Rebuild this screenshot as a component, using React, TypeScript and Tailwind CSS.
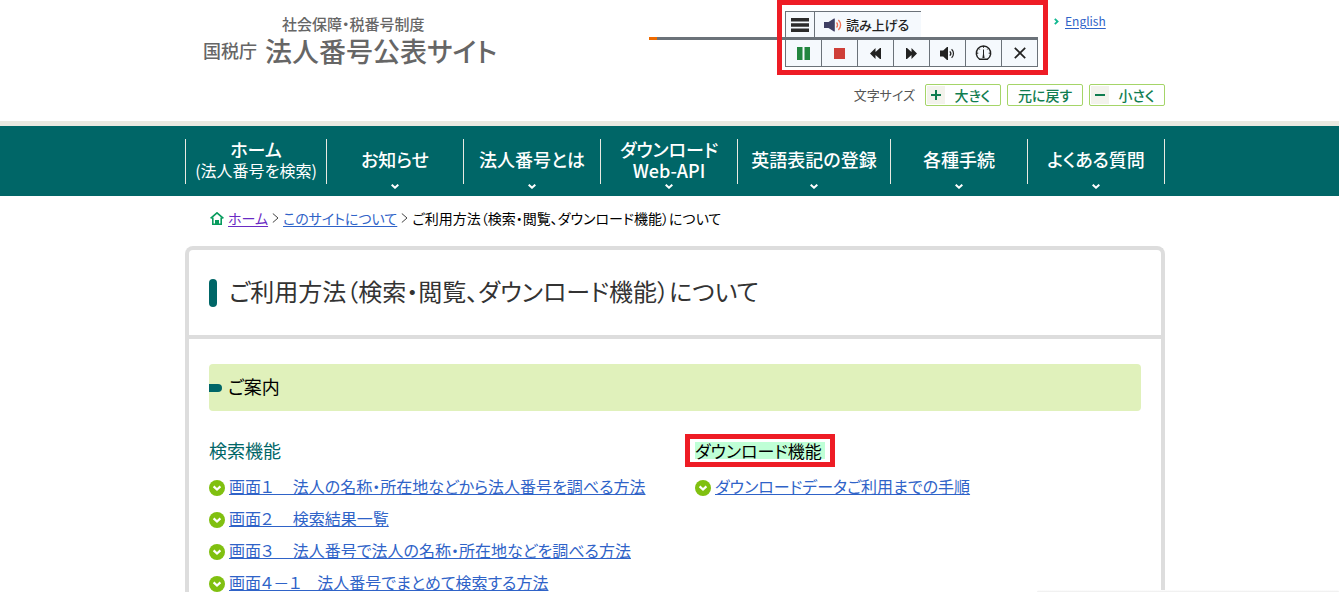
import type { ReactNode } from "react";

type NavItem = { label: string; sub?: string; wide?: boolean; arrow?: boolean };

const navItems: NavItem[] = [
  { label: "ホーム", sub: "(法人番号を検索)" },
  { label: "お知らせ", arrow: true },
  { label: "法人番号とは", arrow: true },
  { label: "ダウンロード", sub: "Web-API", arrow: true },
  { label: "英語表記の登録", wide: true, arrow: true },
  { label: "各種手続", arrow: true },
  { label: "よくある質問", arrow: true },
];

const searchLinks = [
  "画面１　 法人の名称・所在地などから法人番号を調べる方法",
  "画面２　 検索結果一覧",
  "画面３　 法人番号で法人の名称・所在地などを調べる方法",
  "画面４－１　法人番号でまとめて検索する方法",
];

function PlayerButton({ label, children }: { label: string; children: ReactNode }) {
  return (
    <button
      type="button"
      aria-label={label}
      className="flex w-9 items-center justify-center border-r border-[#6b7279] bg-[#f5f9fd] first:w-[37px] first:border-l"
    >
      {children}
    </button>
  );
}

function Player() {
  return (
    <div className="h-[75px] w-[271px] shrink-0 border-[5px] border-[#ee1c25] pt-[6px]">
      <div className="ml-[3px] flex h-[26px]">
        <button
          type="button"
          aria-label="メニュー"
          className="flex w-[30px] items-center justify-center border border-b-0 border-[#6b7279] bg-[#f5f9fd]"
        >
          <svg width="18" height="14" viewBox="0 0 18 14" fill="#2a2a2a">
            <path d="M0 0h18v3.4H0zM0 5.3h18v3.4H0zM0 10.6h18V14H0z" />
          </svg>
        </button>
        <button
          type="button"
          className="flex w-[106px] items-center gap-1 border-t border-[#6b7279] bg-[#f5f9fd] pl-[9px] text-[13px] font-medium text-[#222]"
        >
          <svg width="18" height="14" viewBox="0 0 18 14" fill="none">
            <path d="M0 4h4.5L10 0.5h.8v13H10L4.5 10H0z" fill="#3f3f63" />
            <path d="M12.5 4.5c1.4 1.3 1.4 3.7 0 5M14.4 2c2.9 2.7 2.9 7.3 0 10" stroke="#f47458" strokeWidth="1.4" />
          </svg>
          読み上げる
        </button>
      </div>
      <div className="mr-[5px] h-[3px] bg-[#6b7279]" />
      <div className="ml-[3px] flex h-[27px]">
        <div className="flex border-b border-[#6b7279]">
          <PlayerButton label="一時停止">
            <svg width="13" height="13" viewBox="0 0 13 13" fill="#22863f">
              <path d="M0 0h5.5v13H0zM7.5 0H13v13H7.5z" />
            </svg>
          </PlayerButton>
          <PlayerButton label="停止">
            <svg width="11" height="11" viewBox="0 0 11 11">
              <path d="M0 0h11v11H0z" fill="#cf3f38" />
            </svg>
          </PlayerButton>
          <PlayerButton label="前へ">
            <svg width="11" height="11" viewBox="0 0 11 11" fill="#222">
              <path d="M5.5 0v4L10 0h1v11h-1L5.5 7v4L0 5.5z" />
            </svg>
          </PlayerButton>
          <PlayerButton label="次へ">
            <svg width="11" height="11" viewBox="0 0 11 11" fill="#222">
              <path d="M5.5 0v4L1 0H0v11h1L5.5 7v4L11 5.5z" />
            </svg>
          </PlayerButton>
          <PlayerButton label="音量">
            <svg width="15" height="13" viewBox="0 0 15 13" fill="none">
              <path d="M0 3.5h3.2L7 0h1v13H7L3.2 9.5H0z" fill="#222" />
              <path d="M9.8 4.3c1.2 1.2 1.2 3.2 0 4.4M11.6 2.2c2.5 2.4 2.5 6.2 0 8.6" stroke="#222" strokeWidth="1.2" />
            </svg>
          </PlayerButton>
          <PlayerButton label="速度">
            <svg width="17" height="16" viewBox="0 0 17 16" fill="none" stroke="#222">
              <path d="M4.5 14.2a7.2 7.2 0 1 1 8 0z" strokeWidth="1.4" />
              <path d="M8.5 4.5v7" strokeWidth="1" />
              <path d="M8.1 8.5h.8l.7 4.5H7.4z" fill="#222" stroke="none" />
              <path d="M1.5 8.2h1.8M13.7 8.2h1.8M3.6 3.4l1.1 1.1M13.4 3.4l-1.1 1.1M8.5 1v1.8" strokeWidth="1" />
            </svg>
          </PlayerButton>
          <PlayerButton label="閉じる">
            <svg width="12" height="12" viewBox="0 0 12 12" stroke="#222" strokeWidth="1.7">
              <path d="M.8.8l10.4 10.4M11.2.8.8 11.2" />
            </svg>
          </PlayerButton>
        </div>
      </div>
    </div>
  );
}

function SizeButton({ sign, children }: { sign?: "plus" | "minus"; children: string }) {
  return (
    <button
      type="button"
      className="flex h-[22px] w-[76px] items-center rounded-[2px] border border-[#a5d568] bg-white text-sm font-medium text-[#107d50]"
    >
      {sign && (
        <span className="ml-px flex h-[18px] w-[18px] items-center justify-center bg-[#f3f3ec]">
          <svg width="10" height="10" viewBox="0 0 10 10" fill="#107d50">
            <path d={sign === "plus" ? "M4 0h2v4h4v2H6v4H4V6H0V4h4z" : "M0 4h10v2H0z"} />
          </svg>
        </span>
      )}
      <span className="flex-1 pb-px text-center">{children}</span>
    </button>
  );
}

function CircleLink({ children }: { children: string }) {
  return (
    <li className="flex h-4 items-center gap-1">
      <svg className="shrink-0" width="16" height="16" viewBox="0 0 16 16" fill="none">
        <circle cx="8" cy="8" r="8" fill="#80c010" />
        <path d="M4.6 6.4 8 9.6l3.4-3.2" stroke="#fff" strokeWidth="2.2" />
      </svg>
      <a href="#" className="whitespace-pre pb-1 text-base leading-4 text-[#2f63c8] underline underline-offset-1">
        {children}
      </a>
    </li>
  );
}

function Chevron() {
  return (
    <svg width="7" height="10" viewBox="0 0 7 10" fill="none" stroke="#444" strokeWidth="1">
      <path d="M.8.5 6 5 .8 9.5" />
    </svg>
  );
}

export default function App() {
  return (
    <div className="relative bg-white font-['Noto_Sans_CJK_JP',sans-serif] text-black [font-feature-settings:'palt']">
      <header className="pl-[11px]">
        <div className="mx-auto flex max-w-[980px] justify-between">
          <a href="#" className="mt-3 ml-[18px] block font-medium text-[#666]">
            <span className="block pl-[79px] text-[15px] leading-6">社会保障・税番号制度</span>
            <span className="flex items-center gap-2 leading-[29px]">
              <span className="text-[18px]">国税庁</span>
              <span className="text-[27px]">法人番号公表サイト</span>
            </span>
          </a>
          <div className="w-[516px]">
            <div className="flex">
              <div className="mt-[37px] h-[3px] flex-1 border-l-8 border-[#ee6a00] bg-[#6b7279]" />
              <Player />
              <div className="flex w-[117px] items-center gap-[6px] self-start pt-[11px] pl-[6px]">
                <svg width="5" height="7" viewBox="0 0 5 7" fill="none" stroke="#10b890" strokeWidth="1.8">
                  <path d="M.8.8 3.6 3.5.8 6.2" />
                </svg>
                <a href="#" className="text-[12px] leading-5 text-[#2f63c8] underline underline-offset-2">
                  English
                </a>
              </div>
            </div>
            <div className="mt-[9px] mb-[15px] flex items-center justify-end gap-[6px]">
              <span className="mr-1 pb-px text-[13px] leading-5 text-[#555]">文字サイズ</span>
              <SizeButton sign="plus">大きく</SizeButton>
              <SizeButton>元に戻す</SizeButton>
              <SizeButton sign="minus">小さく</SizeButton>
            </div>
          </div>
        </div>
      </header>

      <nav className="border-t-[5px] border-[#e9e9e1] bg-[#006667] pl-[11px]">
        <ul className="mx-auto flex h-[70px] max-w-[980px] pt-[13px] text-white">
          {navItems.map((item, i) => (
            <li
              key={item.label}
              className={
                i === 0
                  ? "h-[45px] w-[142px] border-x border-[#e9e9e1]"
                  : item.wide
                    ? "h-[45px] w-[153px] border-r border-[#e9e9e1]"
                    : "h-[45px] flex-1 border-r border-[#e9e9e1]"
              }
            >
              <a href="#" className="relative flex h-[45px] flex-col items-center justify-center pb-1 text-lg leading-[21px] font-medium">
                <span>{item.label}</span>
                {item.sub && <span className={i === 0 ? "text-base leading-[21px] font-normal" : ""}>{item.sub}</span>}
                {item.arrow && (
                  <svg className="absolute top-[45px]" width="8" height="5" viewBox="0 0 8 5" fill="none">
                    <path d="M.7.7 4 3.7 7.3.7" stroke="#fff" strokeWidth="2" />
                  </svg>
                )}
              </a>
            </li>
          ))}
        </ul>
      </nav>

      <main className="pl-[11px]">
        <div className="mx-auto max-w-[980px]">
          <div className="flex h-[50px] items-center gap-1 pb-[6px] pl-[25px] text-sm leading-5">
            <svg width="14" height="13" viewBox="0 0 14 13" fill="none" stroke="#079b5d">
              <path d="M.6 6.4 7 .9l6.4 5.5" strokeWidth="1.7" />
              <path d="M2.8 5.5v6.7h8.4V5.5" strokeWidth="1.6" />
              <path d="M5 8h4v5H5z" fill="#079b5d" stroke="none" />
            </svg>
            <a href="#" className="text-[#6a2bc4] underline underline-offset-2">ホーム</a>
            <Chevron />
            <a href="#" className="text-[#2f63c8] underline underline-offset-2">このサイトについて</a>
            <Chevron />
            <span>ご利用方法（検索・閲覧、ダウンロード機能）について</span>
          </div>

          <section className="rounded-t-lg border-4 border-b-0 border-[#ddd]">
            <div className="flex h-[89px] items-center gap-3 border-b-4 border-[#ddd] px-5">
              <span className="h-7 w-2 rounded-full bg-[#006667]" />
              <h1 className="pb-1 text-2xl text-[#333]">ご利用方法（検索・閲覧、ダウンロード機能）について</h1>
            </div>
            <div className="px-5 pt-[25px]">
              <div className="flex h-[47px] items-center gap-[6px] rounded bg-[#e0f1bb]">
                <span className="h-2 w-[13px] rounded-r-full bg-[#006667]" />
                <h2 className="pb-[3px] text-lg">ご案内</h2>
              </div>
              <div className="mt-[23px] grid grid-cols-2 gap-10">
                <div>
                  <h3 className="flex h-[33px] items-center pb-[2px] text-lg text-[#006667]">検索機能</h3>
                  <ul className="mt-[13px] flex flex-col gap-4">
                    {searchLinks.map((text) => (
                      <CircleLink key={text}>{text}</CircleLink>
                    ))}
                  </ul>
                </div>
                <div>
                  <h3 className="-ml-[10px] flex h-[33px] w-fit items-center border-[5px] border-[#ee1c25] px-[5px] text-[17px]">
                    <span className="bg-[#bfffd6] pr-[3px] leading-[17px]">ダウンロード機能</span>
                  </h3>
                  <ul className="mt-[13px] flex flex-col gap-4">
                    <CircleLink>ダウンロードデータご利用までの手順</CircleLink>
                  </ul>
                </div>
              </div>
            </div>
          </section>
        </div>
      </main>
      <div className="absolute right-0 bottom-0 h-[2px] w-[302px] rounded-t bg-linear-to-b from-white to-[#ececec]" />
    </div>
  );
}
